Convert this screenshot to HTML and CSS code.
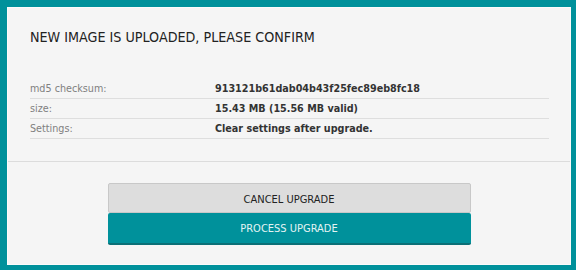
FILE: index.html
```html
<!DOCTYPE html>
<html>
<head>
<meta charset="utf-8">
<link rel="stylesheet" href="styles.css">
</head>
<body>
<div class="panel">
  <div class="info">
    <h1 class="title">NEW IMAGE IS UPLOADED, PLEASE CONFIRM</h1>
    <div class="rows">
      <div class="row"><span class="label">md5 checksum:</span><span class="value">913121b61dab04b43f25fec89eb8fc18</span></div>
      <div class="row"><span class="label">size:</span><span class="value">15.43 MB (15.56 MB valid)</span></div>
      <div class="row"><span class="label">Settings:</span><span class="value">Clear settings after upgrade.</span></div>
    </div>
  </div>
  <div class="actions">
    <button class="btn btn-cancel">CANCEL UPGRADE</button>
    <button class="btn btn-process">PROCESS UPGRADE</button>
  </div>
</div>
</body>
</html>
```
FILE: styles.css
```css
html, body {
  margin: 0;
  height: 100%;
}
body {
  background: #00919b;
  padding: 7px 5px 5px 7px;
  box-sizing: border-box;
  font-family: "DejaVu Sans Condensed", "DejaVu Sans", sans-serif;
}
.panel {
  height: 100%;
  box-sizing: border-box;
  background: #f5f5f5;
  border: 1px solid #fbfbfb;
}
.info {
  padding: 19px 21px 22px 22px;
  border-bottom: 1px solid #dcdcdc;
}
.title {
  margin: 0 0 32px;
  font-size: 14.2px;
  line-height: 20px;
  font-weight: normal;
  color: #222;
}
.row {
  display: flex;
  height: 19px;
  line-height: 19px;
  border-bottom: 1px solid #dedede;
  font-size: 10.7px;
}
.label {
  width: 185px;
  color: #808080;
}
.value {
  font-weight: bold;
  color: #333;
}
.actions {
  padding-top: 21px;
  display: flex;
  flex-direction: column;
  align-items: center;
}
.btn {
  width: 363px;
  font-family: inherit;
  font-size: 11px;
  border-radius: 2px;
  margin: 0;
  cursor: pointer;
}
.btn-cancel {
  height: 30px;
  padding-top: 3px;
  background: #dddddd;
  border: 1px solid #c8c8c8;
  color: #222;
}
.btn-process {
  height: 32px;
  padding-top: 1px;
  background: #00919b;
  border: none;
  border-bottom: 2px solid #0b6f76;
  color: #e4f4f4;
}
```
